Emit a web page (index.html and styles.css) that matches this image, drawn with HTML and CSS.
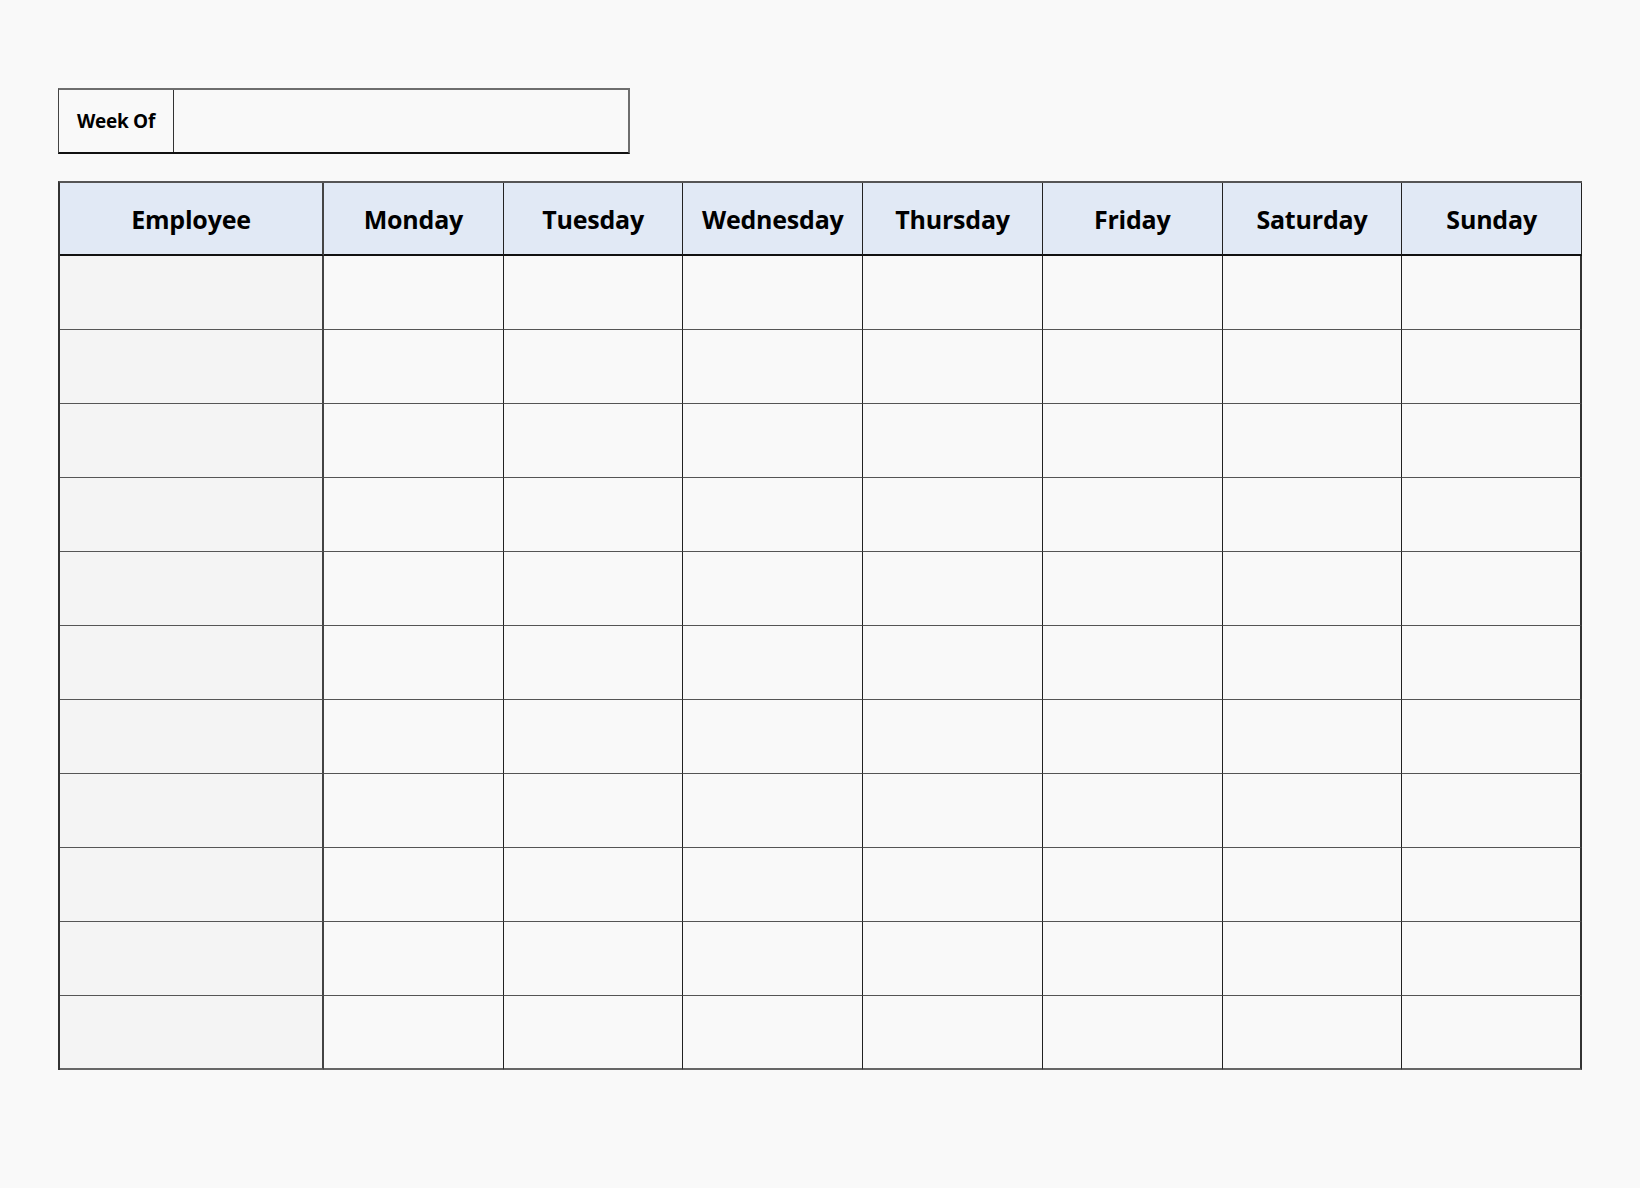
FILE: index.html
```html
<!DOCTYPE html>
<html>
<head>
<meta charset="utf-8">
<link rel="stylesheet" href="styles.css">
</head>
<body>
<div class="page">
  <div class="week">
    <div class="week-label">Week Of</div>
    <div class="week-value"></div>
  </div>
  <div class="schedule">
    <div class="cell head">Employee</div>
    <div class="cell head">Monday</div>
    <div class="cell head">Tuesday</div>
    <div class="cell head">Wednesday</div>
    <div class="cell head">Thursday</div>
    <div class="cell head">Friday</div>
    <div class="cell head">Saturday</div>
    <div class="cell head">Sunday</div>

    <div class="cell emp"></div><div class="cell"></div><div class="cell"></div><div class="cell"></div><div class="cell"></div><div class="cell"></div><div class="cell"></div><div class="cell last"></div>
    <div class="cell emp"></div><div class="cell"></div><div class="cell"></div><div class="cell"></div><div class="cell"></div><div class="cell"></div><div class="cell"></div><div class="cell last"></div>
    <div class="cell emp"></div><div class="cell"></div><div class="cell"></div><div class="cell"></div><div class="cell"></div><div class="cell"></div><div class="cell"></div><div class="cell last"></div>
    <div class="cell emp"></div><div class="cell"></div><div class="cell"></div><div class="cell"></div><div class="cell"></div><div class="cell"></div><div class="cell"></div><div class="cell last"></div>
    <div class="cell emp"></div><div class="cell"></div><div class="cell"></div><div class="cell"></div><div class="cell"></div><div class="cell"></div><div class="cell"></div><div class="cell last"></div>
    <div class="cell emp"></div><div class="cell"></div><div class="cell"></div><div class="cell"></div><div class="cell"></div><div class="cell"></div><div class="cell"></div><div class="cell last"></div>
    <div class="cell emp"></div><div class="cell"></div><div class="cell"></div><div class="cell"></div><div class="cell"></div><div class="cell"></div><div class="cell"></div><div class="cell last"></div>
    <div class="cell emp"></div><div class="cell"></div><div class="cell"></div><div class="cell"></div><div class="cell"></div><div class="cell"></div><div class="cell"></div><div class="cell last"></div>
    <div class="cell emp"></div><div class="cell"></div><div class="cell"></div><div class="cell"></div><div class="cell"></div><div class="cell"></div><div class="cell"></div><div class="cell last"></div>
    <div class="cell emp"></div><div class="cell"></div><div class="cell"></div><div class="cell"></div><div class="cell"></div><div class="cell"></div><div class="cell"></div><div class="cell last"></div>
    <div class="cell emp bottom"></div><div class="cell bottom"></div><div class="cell bottom"></div><div class="cell bottom"></div><div class="cell bottom"></div><div class="cell bottom"></div><div class="cell bottom"></div><div class="cell last bottom"></div>
  </div>
</div>
</body>
</html>
```
FILE: styles.css
```css
html, body {
  margin: 0;
  padding: 0;
  background: #f9f9f9;
}
.page {
  padding: 88px 0 0 58px;
  font-family: "Open Sans", "Liberation Sans", sans-serif;
  color: #000;
}
.week {
  display: flex;
  width: 572px;
  height: 66px;
  box-sizing: border-box;
  border: 1px solid #444;
  border-top: 2px solid #6e6e6e;
  border-right: 2px solid #6e6e6e;
  border-bottom: 2px solid #111;
}
.week-label {
  width: 114px;
  border-right: 1px solid #333;
  display: flex;
  align-items: center;
  justify-content: center;
  font-weight: 700;
  font-size: 19px;
  letter-spacing: -0.3px;
}
.week-value {
  flex: 1;
}
.schedule {
  margin-top: 27px;
  width: 1524px;
  box-sizing: border-box;
  display: grid;
  grid-template-columns: 264px repeat(7, 1fr);
  grid-template-rows: 73px repeat(11, 74px);
  border-top: 2px solid #555;
  border-left: 2px solid #333;
}
.cell {
  box-sizing: border-box;
  border-right: 1px solid #222;
  border-bottom: 1px solid #555;
  background: #f9f9f9;
}
.cell.emp {
  background: #f4f4f4;
  border-right: 2px solid #444;
}
.cell.last {
  border-right: 2px solid #333;
}
.cell.bottom {
  border-bottom: 2px solid #666;
}
.cell.head {
  background: #e1e9f5;
  display: flex;
  align-items: center;
  justify-content: center;
  font-weight: 700;
  font-size: 25px;
  letter-spacing: -0.2px;
  border-bottom: 2px solid #111;
}
.cell.head:first-child {
  border-right: 2px solid #444;
}
.cell.head:last-child {
  border-right: 2px solid #333;
}
```
